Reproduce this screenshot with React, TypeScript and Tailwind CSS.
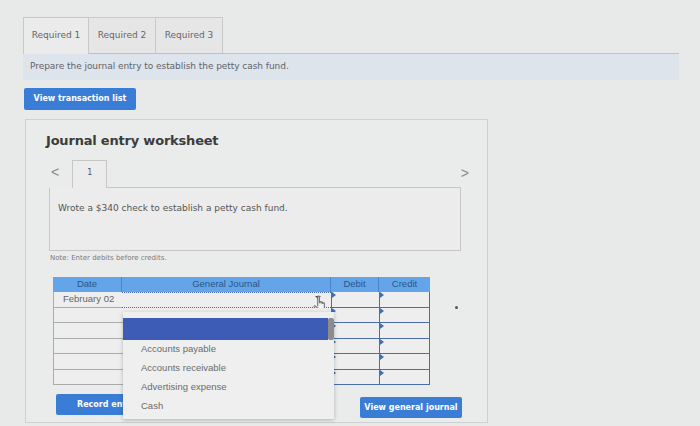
const options = ['Accounts payable', 'Accounts receivable', 'Advertising expense', 'Cash'];

function Tab({ label, active }: { label: string; active?: boolean }) {
  return (
    <div
      className={
        active
          ? 'w-[66px] h-[37px] flex items-center justify-center border border-b-0 border-[#c9c9c9] bg-[#ebebeb]'
          : 'w-[67px] h-[37px] flex items-center justify-center border border-l-0 border-[#c9c9c9] border-b-[#b9c3cd] bg-[#e6e6e6]'
      }
    >
      <span className="text-[9px] text-[#666]">{label}</span>
    </div>
  );
}

function Flag() {
  return <span className="absolute left-0 top-0 w-0 h-0 border-t-[3px] border-b-[3px] border-l-[4px] border-t-transparent border-b-transparent border-l-[#3f6fb0]" />;
}

export default function App() {
  return (
    <div className="relative w-[700px] h-[426px] overflow-hidden bg-[#e8e9e9] font-['DejaVu_Sans',sans-serif] text-[#555]">
      <div className="pl-[23px] pt-[17px]">
        {/* Tabs */}
        <div className="flex w-[656px]">
          <Tab label="Required 1" active />
          <Tab label="Required 2" />
          <Tab label="Required 3" />
          <div className="flex-1 border-b border-[#b9c3cd]" />
        </div>
        <div className="w-[656px] h-[26px] bg-[#dde4ec] flex items-center pl-[7px]">
          <span className="text-[9px] tracking-[-0.05px] text-[#5f6368]">Prepare the journal entry to establish the petty cash fund.</span>
        </div>

        <button className="mt-[8px] ml-[1px] w-[112px] h-[22px] rounded-[2px] bg-[#3a7dd6] text-white text-[8px] font-bold flex items-center justify-center">
          View transaction list
        </button>

        {/* Worksheet panel */}
        <div className="mt-[9px] ml-[2px] w-[463px] h-[304px] border border-[#cfd1d1] bg-[#eaebeb] pl-[23px] pt-[13px]">
          <h2 className="-ml-[3px] text-[13px] leading-[16px] font-bold tracking-[-0.2px] text-[#3c3c3c]">Journal entry worksheet</h2>

          <div className="mt-[11px] flex items-stretch h-[28px] w-[420px]">
            <span className="pl-[2px] pt-[5px] text-[14px] leading-none text-[#8a8a8a] font-['Liberation_Sans',sans-serif]">&lt;</span>
            <div className="ml-[13px] w-[35px] border border-b-0 border-[#c6c6c6] bg-[#ececec] flex justify-center pt-[6px]">
              <span className="text-[8px] text-[#555]">1</span>
            </div>
            <div className="flex-1 border-b border-[#c6c6c6]" />
            <span className="pt-[6px] text-[14px] leading-none text-[#8a8a8a] font-['Liberation_Sans',sans-serif]">&gt;</span>
          </div>
          <div className="w-[412px] h-[63px] border border-t-0 border-[#c6c6c6] bg-[#ececec] pl-[8px] pt-[6px]">
            <span className="text-[9px] text-[#555]">Wrote a $340 check to establish a petty cash fund.</span>
          </div>

          <p className="mt-[2px] ml-[1px] text-[7px] leading-[10px] text-[#7a7a7a]">Note: Enter debits before credits.</p>

          {/* Table */}
          <div className="relative mt-[14px] ml-[4px] w-[377px] font-['Liberation_Sans',sans-serif]">
            <div className="flex h-[15px] bg-[#64a5e9] text-[#285689] text-[9.5px]">
              <div className="w-[69px] flex items-center justify-center border-r border-[#4c86c6]">Date</div>
              <div className="w-[209px] flex items-center justify-center border-r border-[#4c86c6]">General Journal</div>
              <div className="w-[48px] flex items-center justify-center border-r border-[#4c86c6]">Debit</div>
              <div className="flex-1 flex items-center justify-center">Credit</div>
            </div>
            {[0, 1, 2, 3, 4, 5].map((i) => (
              <div key={i} className="flex h-[15.5px]">
                <div className="w-[69px] border-l border-b border-[#a9abad] bg-[#eeeeee] flex items-center pl-[9px] text-[9.5px] text-[#666]">
                  {i === 0 ? 'February 02' : ''}
                </div>
                <div
                  className={
                    i === 0
                      ? 'relative w-[209px] border-y border-dotted border-[#4666a8] bg-[#eeeeee]'
                      : 'relative w-[209px] border-b border-[#a9abad] bg-[#eeeeee]'
                  }
                >
                  {i === 0 && (
                    <>
                      <span className="absolute right-[10px] top-[3px] w-0 h-0 border-l-[3px] border-r-[3px] border-t-[3px] border-l-transparent border-r-transparent border-t-[#444]" />
                      <svg className="absolute right-[5px] top-[2px]" width="13" height="19" viewBox="0 0 11 16" fill="#f4f4f4" stroke="#6f6f6f" strokeWidth="0.9">
                        <path d="M4 1.5v8M4 1.5c0-.8 1.4-.8 1.4 0v5.5M5.4 6c0-.8 1.4-.8 1.4 0v1.2M6.8 6.6c0-.8 1.4-.8 1.4 0v1M8.2 7.2c0-.8 1.4-.8 1.4 0v3.3c0 2.3-1.3 4-3.3 4H5.6c-1.5 0-2.4-1-3.2-2.2L1 10.1c-.4-.7.4-1.4 1.1-.8L4 11" />
                      </svg>
                    </>
                  )}
                </div>
                <div className="relative w-[48px] border-l border-b border-[#4a6fa8] bg-[#eeeeee]">
                  <Flag />
                </div>
                <div className="relative flex-1 border-l border-r border-b border-[#4a6fa8] bg-[#eeeeee]">
                  <Flag />
                </div>
              </div>
            ))}

            {/* Open dropdown */}
            <div className="absolute left-[70px] top-[35px] w-[211px] h-[107px] bg-[#efefef] shadow-[0_1px_4px_rgba(0,0,0,0.25)] pt-[6px] z-10">
              <div className="flex h-[22px]">
                <div className="flex-1 bg-[#3d5cb6]" />
                <div className="w-[6px] bg-[#8c8c8c] rounded-[2px]" />
              </div>
              {options.map((o) => (
                <div key={o} className="h-[19px] flex items-center pl-[18px] text-[9.5px] text-[#6b6b6b]">
                  {o}
                </div>
              ))}
            </div>
          </div>

          {/* Buttons */}
          <div className="mt-[9px] ml-[7px] flex w-[406px] items-start">
            <button className="w-[90px] h-[21px] rounded-[2px] bg-[#3a7dd6] text-white text-[8px] font-bold flex items-center pl-[21px]">
              Record entry
            </button>
            <div className="flex-1" />
            <button className="mt-[3px] w-[102px] h-[21px] rounded-[2px] bg-[#3a7dd6] text-white text-[8px] font-bold flex items-center justify-center">
              View general journal
            </button>
          </div>
        </div>
      </div>
      <span className="absolute left-[455px] top-[306px] w-[3px] h-[3px] rounded-full bg-[#555]" />
    </div>
  );
}
